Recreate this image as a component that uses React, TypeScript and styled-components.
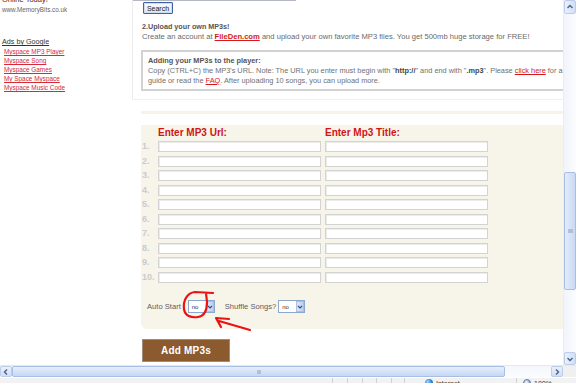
import React from "react";
import styled, { createGlobalStyle } from "styled-components";

const Global = createGlobalStyle`
  html, body { margin: 0; padding: 0; background: #fff; overflow: hidden; }
  body { font-family: "Liberation Sans", Arial, sans-serif; }
`;

const Window = styled.div`
  width: 576px;
  height: 383px;
  display: flex;
  flex-direction: column;
  overflow: hidden;
  position: relative;
`;

const Viewport = styled.div`
  display: flex;
  height: 365px;
  flex: none;
`;

const Page = styled.div`
  flex: 1;
  display: flex;
  overflow: hidden;
  position: relative;
  background: #fff;
`;

const Sidebar = styled.div`
  width: 132px;
  flex: none;
  display: flex;
  flex-direction: column;
  padding-left: 2px;
  box-sizing: border-box;
`;

const OnlineToday = styled.div`
  margin-top: -5px;
  font-size: 7.5px;
  line-height: 10px;
  color: #5a1a1a;
`;

const SiteUrl = styled.div`
  font-size: 6.3px;
  line-height: 10px;
  color: #666;
`;

const AdsBy = styled.a`
  margin-top: 22px;
  font-size: 7.2px;
  line-height: 10px;
  color: #333;
  text-decoration: underline;
  align-self: flex-start;
`;

const AdLink = styled.a`
  padding-left: 2px;
  font-size: 6.4px;
  line-height: 9px;
  color: #d42a3a;
  text-decoration: underline;
  align-self: flex-start;
`;

const Main = styled.div`
  flex: 1;
  min-width: 0;
  display: flex;
  flex-direction: column;
`;

const UpperSection = styled.div`
  border-left: 1px solid #ececec;
  border-bottom: 1px solid #f1f1f1;
  padding-bottom: 8px;
  display: flex;
  flex-direction: column;
  align-items: flex-start;
`;

const SearchStub = styled.div`
  width: 163px;
  height: 0;
  border-bottom: 1px solid #b4b8c4;
`;

const SearchButton = styled.button`
  margin: 1px 0 0 10px;
  height: 12px;
  width: 30px;
  padding: 0;
  font-family: inherit;
  font-size: 7px;
  color: #222;
  border: 1px solid #3f63a3;
  border-radius: 1px;
  background: linear-gradient(#fbfcff, #dfe6f1);
  box-shadow: inset 0 0 0 1px #cfdcf0;
`;

const Text = styled.div<{ $bold?: boolean }>`
  padding-left: 9px;
  font-size: ${(p) => (p.$bold ? 7.2 : 7.6)}px;
  line-height: 10px;
  color: ${(p) => (p.$bold ? "#555" : "#6a6a6a")};
  font-weight: ${(p) => (p.$bold ? 700 : 400)};
  white-space: nowrap;
`;

const UploadTitle = styled(Text)`
  margin-top: 8px;
`;

const RedLink = styled.a<{ $bold?: boolean }>`
  color: #d21a1a;
  text-decoration: underline;
  font-weight: ${(p) => (p.$bold ? 700 : 400)};
`;

const Strong = styled.b`
  color: #444;
`;

const InfoBox = styled.div`
  margin: 8px 0 0 8px;
  width: 440px;
  flex: none;
  border: 2px solid #d2d2d2;
  padding: 4px 0 4px 5px;
  box-sizing: border-box;
`;

const InfoLine = styled.div<{ $bold?: boolean }>`
  font-size: 7.35px;
  line-height: ${(p) => (p.$bold ? 10 : 9.5)}px;
  color: ${(p) => (p.$bold ? "#555" : "#707070")};
  font-weight: ${(p) => (p.$bold ? 700 : 400)};
  white-space: nowrap;
`;

const Strip = styled.div`
  margin: 11px 0 0 9px;
  height: 3px;
  background: #f7f3e8;
`;

const Panel = styled.div`
  margin: 11px 0 0 9px;
  height: 204px;
  box-sizing: border-box;
  background: #f7f4ea;
  border-bottom-left-radius: 6px;
  display: flex;
  flex-direction: column;
`;

const Grid = styled.div`
  display: grid;
  grid-template-columns: 13px 163px 163px;
  column-gap: 4px;
  align-items: center;
`;

const HeaderRow = styled(Grid)`
  padding-top: 2px;
  height: 12px;
`;

const ColTitle = styled.div`
  font-size: 10px;
  line-height: 12px;
  font-weight: 700;
  color: #d11414;
  white-space: nowrap;
`;

const Rows = styled.div`
  margin-top: 2px;
  display: flex;
  flex-direction: column;
  gap: 3.5px;
`;

const Row = styled(Grid)`
  height: 11px;
`;

const RowNum = styled.div`
  padding-left: 1px;
  font-size: 9px;
  font-weight: 700;
  color: #cbcbcb;
  line-height: 11px;
  white-space: nowrap;
`;

const Field = styled.input`
  height: 11px;
  box-sizing: border-box;
  margin: 0;
  padding: 0;
  border: 1px solid #d3d3d3;
  box-shadow: inset 1px 1px 0 #ececec;
  background: #fff;
`;

const Options = styled.div`
  margin-top: 17.5px;
  padding-left: 6px;
  display: flex;
  align-items: center;
  height: 13px;
`;

const OptLabel = styled.span`
  font-size: 7.6px;
  color: #5e5e5e;
  white-space: nowrap;
`;

const Select = styled.div<{ $left: number; $right: number }>`
  margin: 0 ${(p) => p.$right}px 0 ${(p) => p.$left}px;
  width: 27px;
  height: 13px;
  box-sizing: border-box;
  border: 1px solid #8ea7cc;
  background: #fff;
  display: flex;
  align-items: center;
`;

const SelectValue = styled.span`
  flex: 1;
  padding-left: 3px;
  font-size: 6px;
  color: #333;
`;

const SelectArrow = styled.div`
  width: 8px;
  height: 11px;
  box-sizing: border-box;
  border: 1px solid #a9bfe3;
  background: linear-gradient(90deg, #dce7fa, #bcd0f2);
  display: flex;
  align-items: center;
  justify-content: center;
`;

const AddButton = styled.button`
  margin: 10px 0 0 10px;
  width: 88px;
  height: 23px;
  align-self: flex-start;
  padding: 0;
  border: 1px solid #a08c7a;
  background: #8b5a2e;
  color: #fff;
  font-family: inherit;
  font-weight: 700;
  font-size: 10px;
  letter-spacing: 0.2px;
`;

const Annotation = styled.svg`
  position: absolute;
  left: 0;
  top: 0;
  pointer-events: none;
`;

/* ---- browser chrome ---- */

const VScroll = styled.div`
  width: 13px;
  flex: none;
  display: flex;
  flex-direction: column;
  background: linear-gradient(90deg, #f1f4fa, #fbfcfe);
  border-left: 1px solid #e8edf6;
  box-sizing: border-box;
`;

const ScrollBtn = styled.div<{ $h: number }>`
  height: ${(p) => p.$h}px;
  flex: none;
  box-sizing: border-box;
  border: 1px solid #bccde9;
  border-radius: 2px;
  background: linear-gradient(90deg, #eaf1fd, #d0def6);
  display: flex;
  align-items: center;
  justify-content: center;
`;

const VTrack = styled.div`
  flex: 1;
  display: flex;
  flex-direction: column;
`;

const VThumb = styled.div`
  margin-top: 158px;
  height: 118px;
  box-sizing: border-box;
  border: 1px solid #a7bfe5;
  border-radius: 2px;
  background: linear-gradient(90deg, #e3ecfb, #c9d9f4);
  display: flex;
  align-items: center;
  justify-content: center;
`;

const Grip = styled.div<{ $w: number; $h: number }>`
  width: ${(p) => p.$w}px;
  height: ${(p) => p.$h}px;
  background: #9fb2cf;
  opacity: 0.7;
`;

const HScroll = styled.div`
  height: 12px;
  flex: none;
  display: flex;
  background: linear-gradient(#f3f6fb, #fbfcfe);
  border-top: 1px solid #e3e9f3;
  box-sizing: border-box;
`;

const HBtn = styled(ScrollBtn)`
  width: 12px;
  background: linear-gradient(#eaf1fd, #d0def6);
`;

const HThumb = styled.div`
  width: 493px;
  flex: none;
  box-sizing: border-box;
  border: 1px solid #a7bfe5;
  border-radius: 2px;
  background: linear-gradient(#e6eefc, #c6d7f4);
  display: flex;
  align-items: center;
  justify-content: center;
`;

const HTrack = styled.div`
  flex: 1;
`;

const Corner = styled.div`
  width: 13px;
  flex: none;
  background: #f0f0f0;
`;

const StatusBar = styled.div`
  height: 6px;
  flex: none;
  display: flex;
  background: #f2f2f2;
  border-top: 1px solid #fff;
  overflow: hidden;
  box-sizing: border-box;
`;

const Pane = styled.div<{ $w?: number; $pad?: number }>`
  ${(p) => (p.$w ? `width: ${p.$w}px; flex: none;` : "flex: 1;")}
  border-right: 1px solid #d2d2d2;
  box-sizing: border-box;
  display: flex;
  align-items: flex-start;
  padding-left: ${(p) => p.$pad ?? 6}px;
  gap: 3px;
  font-size: 7px;
  line-height: 12px;
  color: #333;
  white-space: nowrap;
  &:last-child { border-right: 0; }
`;

const Globe = styled.div`
  width: 8px;
  height: 8px;
  margin-top: 1px;
  border-radius: 50%;
  background: radial-gradient(circle at 35% 35%, #9fd6ff, #2b7bd6 55%, #2a8f3a);
`;

const ZoomIcon = styled.div`
  width: 8px;
  height: 8px;
  margin-top: 1px;
  border-radius: 50%;
  background: radial-gradient(circle at 40% 35%, #ffffff, #7a8fb8 70%);
  border: 1px solid #6d7f9f;
  box-sizing: border-box;
`;

const Chevron = ({ dir }: { dir: "up" | "down" | "left" | "right" }) => {
  const d = {
    up: "M1.5 5 L4 2.5 L6.5 5",
    down: "M1.5 3 L4 5.5 L6.5 3",
    left: "M5 1.5 L2.5 4 L5 6.5",
    right: "M3 1.5 L5.5 4 L3 6.5",
  }[dir];
  return (
    <svg width="8" height="8" viewBox="0 0 8 8">
      <path d={d} fill="none" stroke="#4d6185" strokeWidth="1.4" />
    </svg>
  );
};

const SmallArrow = () => (
  <svg width="6" height="6" viewBox="0 0 6 6">
    <path d="M1 2 L3 4 L5 2" fill="none" stroke="#3d4f73" strokeWidth="1.2" />
  </svg>
);

const ads = [
  "Myspace MP3 Player",
  "Myspace Song",
  "Myspace Games",
  "My Space Myspace",
  "Myspace Music Code",
];

export default function App() {
  const rows = Array.from({ length: 10 }, (_, i) => i + 1);
  return (
    <Window>
      <Global />
      <Viewport>
        <Page>
          <Sidebar>
            <OnlineToday>Online Today!</OnlineToday>
            <SiteUrl>www.MemoryBits.co.uk</SiteUrl>
            <AdsBy>Ads by Google</AdsBy>
            {ads.map((a) => (
              <AdLink key={a}>{a}</AdLink>
            ))}
          </Sidebar>
          <Main>
            <UpperSection>
              <SearchStub />
              <SearchButton>Search</SearchButton>
              <UploadTitle $bold>2.Upload your own MP3s!</UploadTitle>
              <Text>
                Create an account at <RedLink $bold>FileDen.com</RedLink> and upload your own favorite MP3
                files. You get 500mb huge storage for FREE!
              </Text>
              <InfoBox>
                <InfoLine $bold>Adding your MP3s to the player:</InfoLine>
                <InfoLine>
                  Copy (CTRL+C) the MP3's URL. Note: The URL you enter must begin with "<Strong>http://</Strong>"
                  and end with "<Strong>.mp3</Strong>". Please <RedLink>click here</RedLink> for a
                </InfoLine>
                <InfoLine>
                  guide or read the <RedLink>FAQ</RedLink>. After uploading 10 songs, you can upload more.
                </InfoLine>
              </InfoBox>
            </UpperSection>
            <Strip />
            <Panel>
              <HeaderRow>
                <span />
                <ColTitle>Enter MP3 Url:</ColTitle>
                <ColTitle>Enter Mp3 Title:</ColTitle>
              </HeaderRow>
              <Rows>
                {rows.map((n) => (
                  <Row key={n}>
                    <RowNum>{n}.</RowNum>
                    <Field />
                    <Field />
                  </Row>
                ))}
              </Rows>
              <Options>
                <OptLabel>Auto Start</OptLabel>
                <Select $left={7} $right={10}>
                  <SelectValue>no</SelectValue>
                  <SelectArrow>
                    <SmallArrow />
                  </SelectArrow>
                </Select>
                <OptLabel>Shuffle Songs?</OptLabel>
                <Select $left={2} $right={0}>
                  <SelectValue>no</SelectValue>
                  <SelectArrow>
                    <SmallArrow />
                  </SelectArrow>
                </Select>
              </Options>
            </Panel>
            <AddButton>Add MP3s</AddButton>
          </Main>
          <Annotation width="563" height="365">
            <path
              d="M213 293 L195 292 C186 293 183 302 184 309 C185 316 191 318 198 317 C205 316 207 310 207 302 L206 293"
              fill="none"
              stroke="#ee1111"
              strokeWidth="2.2"
              strokeLinecap="round"
              strokeLinejoin="round"
            />
            <path
              d="M250 330 L219 321 M229 319 L216 318 L221 327"
              fill="none"
              stroke="#ee1111"
              strokeWidth="2.2"
              strokeLinecap="round"
              strokeLinejoin="round"
            />
          </Annotation>
        </Page>
        <VScroll>
          <ScrollBtn $h={14}>
            <Chevron dir="up" />
          </ScrollBtn>
          <VTrack>
            <VThumb>
              <Grip $w={5} $h={4} />
            </VThumb>
          </VTrack>
          <ScrollBtn $h={13}>
            <Chevron dir="down" />
          </ScrollBtn>
        </VScroll>
      </Viewport>
      <HScroll>
        <HBtn $h={11}>
          <Chevron dir="left" />
        </HBtn>
        <HThumb>
          <Grip $w={4} $h={4} />
        </HThumb>
        <HTrack />
        <HBtn $h={11}>
          <Chevron dir="right" />
        </HBtn>
        <Corner />
      </HScroll>
      <StatusBar>
        <Pane $w={333} />
        <Pane $w={15} />
        <Pane $w={15} />
        <Pane $w={14} />
        <Pane $w={15} />
        <Pane $w={13} />
        <Pane $w={112} $pad={20}>
          <Globe />
          Internet
        </Pane>
        <Pane>
          <ZoomIcon />
          100%
        </Pane>
      </StatusBar>
    </Window>
  );
}
